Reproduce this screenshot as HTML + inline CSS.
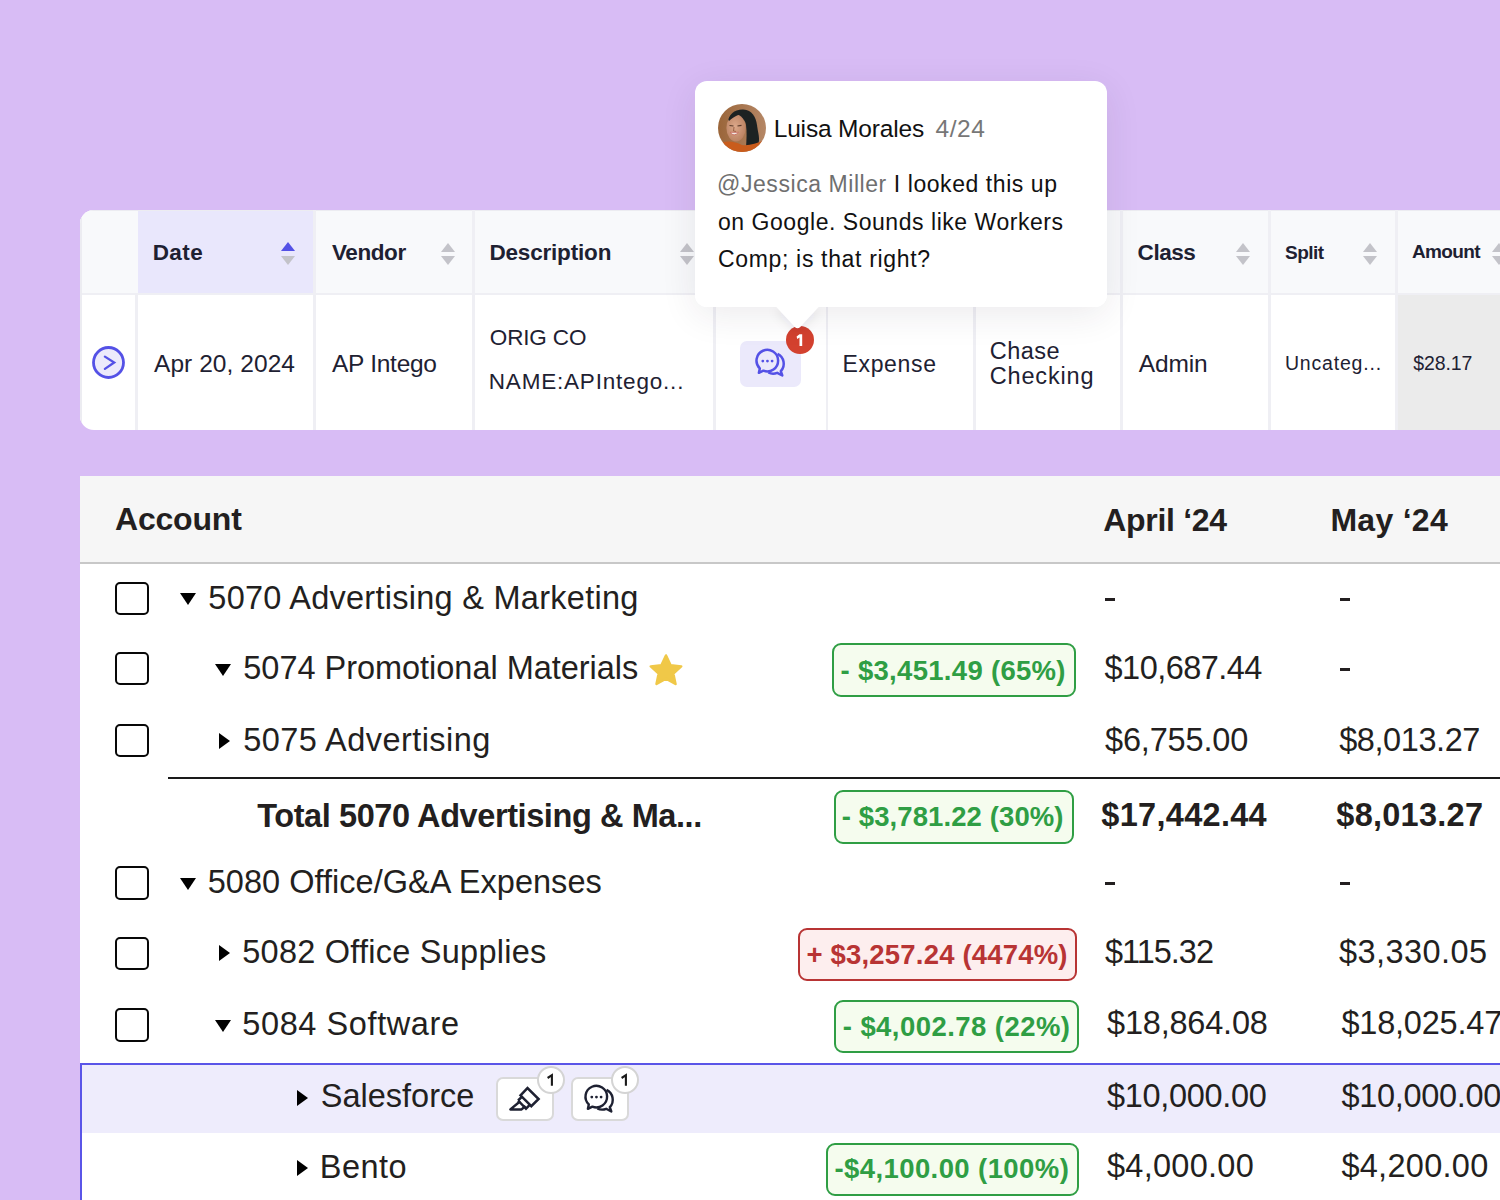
<!DOCTYPE html>
<html><head><meta charset="utf-8">
<style>
html,body{margin:0;padding:0}
html{overflow:hidden;width:1500px;height:1200px}
body{width:1500px;height:1200px;overflow:hidden;position:relative;background:#d8bcf5;font-family:"Liberation Sans",sans-serif}
.a{position:absolute}
.t{position:absolute;white-space:nowrap;line-height:1}
.vd{position:absolute;top:210px;height:220px;width:3px;background:#efeff4}
.up{position:absolute;width:0;height:0;border-left:7.5px solid transparent;border-right:7.5px solid transparent;border-bottom:9px solid #c3c3c9}
.dn{position:absolute;width:0;height:0;border-left:7.5px solid transparent;border-right:7.5px solid transparent;border-top:9px solid #c3c3c9}
.cb{position:absolute;left:115.2px;width:29.6px;height:29.4px;border:2.7px solid #080808;border-radius:5px;background:#fff}
.td{position:absolute;width:0;height:0;border-left:8.5px solid transparent;border-right:8.5px solid transparent;border-top:12px solid #000}
.tr{position:absolute;width:0;height:0;border-top:8.5px solid transparent;border-bottom:8.5px solid transparent;border-left:11.5px solid #000}
.hy{position:absolute;width:9.8px;height:2.8px;background:#231f20}
.bg{position:absolute;border:2px solid #2f9e44;background:#f5fcee;border-radius:9px;box-sizing:border-box}
.bgr{position:absolute;border:2px solid #b83434;background:#fdeeee;border-radius:9px;box-sizing:border-box}
.btn{position:absolute;top:1077px;height:44px;width:58px;box-sizing:border-box;border:2px solid #d9d9d9;border-radius:7px;background:#fff}
.nb{position:absolute;width:28px;height:28px;box-sizing:border-box;border:2px solid #d4d4d4;border-radius:50%;background:#fff;font-size:17px;line-height:24px;text-align:center;color:#1a1a1a}
#root{position:relative;width:1500px;height:1200px;overflow:hidden;background:#d8bcf5}
</style></head><body><div id="root">

<!-- TOP CARD -->
<div class="a" style="left:80px;top:210px;width:1440px;height:220px;background:#fff;border-radius:14px 0 0 14px;overflow:hidden">
  <div class="a" style="left:0;top:0;width:1440px;height:83px;background:#f8f9fb"></div>
  <div class="a" style="left:58px;top:0;width:175px;height:83px;background:#e9e7fc"></div>
  <div class="a" style="left:0;top:83px;width:1440px;height:2px;background:#efeff4"></div>
  <div class="a" style="left:1318px;top:85px;width:200px;height:135px;background:#ebebeb"></div>
  <div class="a" style="left:0;top:0;width:1.5px;height:220px;background:#ececf1"></div>
  <div class="a" style="left:0;top:0;width:1440px;height:1px;background:#ececf1"></div>
</div>
<div class="vd" style="left:135px;top:295px;height:135px"></div>
<div class="vd" style="left:313px"></div>
<div class="vd" style="left:472px"></div>
<div class="vd" style="left:713px;width:2.5px"></div>
<div class="vd" style="left:825.5px;width:2.5px"></div>
<div class="vd" style="left:972.5px"></div>
<div class="vd" style="left:1120px"></div>
<div class="vd" style="left:1268px"></div>
<div class="vd" style="left:1395px"></div>

<!-- sort arrows -->
<div class="up" style="left:281px;top:242px;border-bottom-color:#5451e6"></div><div class="dn" style="left:281px;top:256px"></div>
<div class="up" style="left:440.5px;top:242.5px"></div><div class="dn" style="left:440.5px;top:256px"></div>
<div class="up" style="left:680px;top:242.5px"></div><div class="dn" style="left:680px;top:256px"></div>
<div class="up" style="left:1236px;top:242.5px"></div><div class="dn" style="left:1236px;top:256px"></div>
<div class="up" style="left:1363px;top:242.5px"></div><div class="dn" style="left:1363px;top:256px"></div>
<div class="up" style="left:1492px;top:242.5px"></div><div class="dn" style="left:1492px;top:256px"></div>

<!-- row arrow circle -->
<svg class="a" style="left:90px;top:344px" width="37" height="37" viewBox="0 0 37 37">
  <circle cx="18.5" cy="18.5" r="15" fill="#eceafb" stroke="#5451e6" stroke-width="2.8"/>
  <path d="M14.9 12.6 L24.2 18.5 L14.9 24.9" fill="none" stroke="#5451e6" stroke-width="2.3" stroke-linecap="round" stroke-linejoin="miter"/>
</svg>

<!-- comment box -->
<div class="a" style="left:740px;top:341px;width:61px;height:46px;background:#ebe9fb;border-radius:7px"></div>
<svg class="a" style="left:748.7px;top:344.2px" width="44" height="36" viewBox="0 0 44 36">
  <path d="M14.4 26.7 A10.8 10.8 0 1 0 10.8 24.4 L9.9 28.8 Z" fill="none" stroke="#5451e6" stroke-width="2.5" stroke-linejoin="round"/>
  <path d="M28.5 9.9 A10.8 10.8 0 0 1 31.8 27.1 L33.3 31.5 L28.2 28.8 A10.8 10.8 0 0 1 19.3 28.5" fill="none" stroke="#5451e6" stroke-width="2.5" stroke-linejoin="round"/>
  <circle cx="13.8" cy="17.1" r="1.4" fill="#5451e6"/><circle cx="18.45" cy="17.1" r="1.4" fill="#5451e6"/><circle cx="23.1" cy="17.1" r="1.4" fill="#5451e6"/>
</svg>

<!-- LOWER CARD -->
<div class="a" style="left:80px;top:476px;width:1440px;height:760px;background:#fff">
  <div class="a" style="left:0;top:0;width:1440px;height:86px;background:#f6f6f6"></div>
  <div class="a" style="left:0;top:86px;width:1440px;height:2px;background:#c8c8c8"></div>
</div>
<!-- selected region -->
<div class="a" style="left:82px;top:1065px;width:1440px;height:67.5px;background:#eeecfc"></div>
<div class="a" style="left:80px;top:1063px;width:1440px;height:2px;background:#5a55e8"></div>
<div class="a" style="left:80px;top:1063px;width:2px;height:200px;background:#5a55e8"></div>
<!-- separator -->
<div class="a" style="left:168px;top:777px;width:1340px;height:2.2px;background:#1a1a1a"></div>

<!-- checkboxes -->
<div class="cb" style="top:581.5px"></div>
<div class="cb" style="top:652px"></div>
<div class="cb" style="top:724px"></div>
<div class="cb" style="top:866.3px"></div>
<div class="cb" style="top:936.5px"></div>
<div class="cb" style="top:1008.4px"></div>

<!-- triangles -->
<div class="td" style="left:180px;top:593px"></div>
<div class="td" style="left:215px;top:664px"></div>
<div class="tr" style="left:218.5px;top:733px"></div>
<div class="td" style="left:180px;top:877.5px"></div>
<div class="tr" style="left:218.5px;top:945px"></div>
<div class="td" style="left:215px;top:1019.5px"></div>
<div class="tr" style="left:297px;top:1089.5px"></div>
<div class="tr" style="left:297px;top:1160px"></div>

<!-- star -->
<svg class="a" style="left:648px;top:653.8px" width="36" height="34" viewBox="0 0 36 34">
  <path d="M18 1.5 L22.6 11.2 L33.2 12.4 L25.3 19.6 L27.5 30 L18 24.7 L8.5 30 L10.7 19.6 L2.8 12.4 L13.4 11.2 Z" fill="#f0c848" stroke="#f0c848" stroke-width="2.5" stroke-linejoin="round"/>
</svg>

<!-- hyphens -->
<div class="hy" style="left:1105px;top:598px"></div>
<div class="hy" style="left:1340px;top:598px"></div>
<div class="hy" style="left:1340px;top:668px"></div>
<div class="hy" style="left:1105px;top:882px"></div>
<div class="hy" style="left:1340px;top:882px"></div>

<!-- badges -->
<div class="bg" style="left:832px;top:643px;width:244px;height:54px"></div>
<div class="bg" style="left:833.5px;top:790px;width:240.5px;height:53.5px"></div>
<div class="bgr" style="left:797.5px;top:928px;width:279px;height:53px"></div>
<div class="bg" style="left:834px;top:1000px;width:244.5px;height:53px"></div>
<div class="bg" style="left:825.5px;top:1142.5px;width:253px;height:53px"></div>

<!-- salesforce buttons -->
<div class="btn" style="left:496px"></div>
<div class="btn" style="left:570.5px"></div>
<svg class="a" style="left:500px;top:1080px" width="50" height="36" viewBox="0 0 50 36">
  <path d="M20.5 15.3 L27.5 8.1 L38.6 19 L31.3 26.2 Z" fill="none" stroke="#1e2132" stroke-width="2.5" stroke-linejoin="miter"/>
  <path d="M18.1 20.5 L22 16.6 M18.1 20.5 L26 28.6 L30 24.6" fill="none" stroke="#1e2132" stroke-width="2.5" stroke-linejoin="miter"/>
  <path d="M19.3 22 L10.4 29.4 L21.6 29.4 L24.6 26.8" fill="none" stroke="#1e2132" stroke-width="2.5" stroke-linejoin="round" stroke-linecap="square"/>
</svg>
<svg class="a" style="left:578px;top:1080px" width="44" height="36" viewBox="0 0 44 36">
  <path d="M14.4 26.7 A10.8 10.8 0 1 0 10.8 24.4 L9.9 28.8 Z" fill="none" stroke="#1e2132" stroke-width="2.4" stroke-linejoin="round"/>
  <path d="M28.5 9.9 A10.8 10.8 0 0 1 31.8 27.1 L33.3 31.5 L28.2 28.8 A10.8 10.8 0 0 1 19.3 28.5" fill="none" stroke="#1e2132" stroke-width="2.4" stroke-linejoin="round"/>
  <circle cx="13.8" cy="17.1" r="1.4" fill="#1e2132"/><circle cx="18.45" cy="17.1" r="1.4" fill="#1e2132"/><circle cx="23.1" cy="17.1" r="1.4" fill="#1e2132"/>
</svg>
<div class="nb" style="left:536.5px;top:1065.5px"></div>
<div class="nb" style="left:610.5px;top:1065.5px"></div>

<!-- red badge -->
<div class="a" style="left:786px;top:326px;width:28px;height:28px;border-radius:50%;background:#d3412f;color:#fff;font-size:17px;font-weight:700;line-height:28px;text-align:center"></div>
<!-- TOOLTIP -->
<div class="a" style="left:695px;top:81px;width:412px;height:226px;background:#fff;border-radius:12px;box-shadow:0 8px 36px rgba(40,30,60,0.09)"></div>
<svg class="a" style="left:760px;top:290px" width="76" height="50" viewBox="0 0 76 50">
  <defs><filter id="sh" x="-50%" y="-50%" width="200%" height="200%"><feGaussianBlur stdDeviation="5"/></filter></defs>
  <path d="M13.5 16 L61.5 16 L40 37.2 Q37.5 39.4 35 37.2 Z" fill="rgba(40,30,60,0.07)" filter="url(#sh)" transform="translate(0,4)"/>
  <path d="M13.5 14 L61.5 14 L40 37.2 Q37.5 39.4 35 37.2 Z" fill="#fff"/>
</svg>
<div class="a" style="left:695px;top:240px;width:412px;height:67px;background:#fff;border-radius:0 0 12px 12px"></div>
<!-- avatar -->
<svg class="a" style="left:718px;top:104px" width="48" height="48" viewBox="0 0 48 48">
  <defs><clipPath id="av"><circle cx="24" cy="24" r="24"/></clipPath>
  <filter id="avb" x="-10%" y="-10%" width="120%" height="120%"><feGaussianBlur stdDeviation="0.7"/></filter>
  <linearGradient id="bgav" x1="0" y1="0" x2="1" y2="0"><stop offset="0" stop-color="#9a6539"/><stop offset="1" stop-color="#b58766"/></linearGradient>
  <radialGradient id="skin" cx="0.45" cy="0.45" r="0.6"><stop offset="0" stop-color="#dca88a"/><stop offset="1" stop-color="#b98060"/></radialGradient></defs>
  <g clip-path="url(#av)">
    <rect width="48" height="48" fill="url(#bgav)"/>
    <g filter="url(#avb)">
    <path d="M10 20 C10 10 17 5 25.5 5.5 C34 6 38 13 39 21 C40 29 42.5 35 40 41 L28 44 C28.5 36 29 28 28 21 C27 14 21 11 11.5 14 Z" fill="#1d2224"/>
    <ellipse cx="18" cy="24" rx="9.6" ry="13.4" fill="url(#skin)"/>
    <path d="M10.5 15 C13 9 20 6.5 26.5 8.5 C22 10 16.5 12 11 17 Z" fill="#1d2224"/>
    <path d="M11.5 21.5 L15.5 22 M19.5 22 L23.5 21.3" stroke="#5a3a2a" stroke-width="1.2"/>
    <path d="M16 23 L15.5 27 L18 27.5" stroke="#9c6448" stroke-width="1" fill="none"/>
    <path d="M12 28.3 Q16 33.5 20.5 28.3 Z" fill="#f1e8e2" stroke="#c76e62" stroke-width="0.9"/>
    <path d="M2 48 L4 38.5 C10 36.5 17 37.5 24 41 C31 42 38 39.5 46 36.5 L48 48 Z" fill="#c95b1d"/>
    </g>
  </g>
</svg>


<svg class="a" style="left:0;top:0;overflow:visible" width="1" height="1">
  <path d="M799.5 334.2 L802.2 334.2 L802.2 346 L799.5 346 L799.5 337.6 L797.2 339 L796.6 336.5 Z" fill="#fff"/>
  <path d="M547.6 1078 L551.9 1075.2 L551.9 1085.8" stroke="#1a1a1a" stroke-width="2.1" fill="none"/>
  <path d="M621.6 1078 L625.9 1075.2 L625.9 1085.8" stroke="#1a1a1a" stroke-width="2.1" fill="none"/>
</svg>
<div class="t" style="left:773.7px;top:117.2px;font-size:24.5px;font-weight:400;color:#111111;letter-spacing:-0.168px">Luisa Morales</div>
<div class="t" style="left:935.5px;top:117.2px;font-size:24.5px;font-weight:400;color:#777777;letter-spacing:0.571px">4/24</div>
<div class="t" style="left:717.0px;top:173.0px;font-size:23px;font-weight:400;color:#111111;letter-spacing:0.565px"><span style="color:#6f6f6f">@Jessica Miller</span> I looked this up</div>
<div class="t" style="left:718.0px;top:211.0px;font-size:23px;font-weight:400;color:#111111;letter-spacing:0.537px">on Google. Sounds like Workers</div>
<div class="t" style="left:718.0px;top:248.2px;font-size:23px;font-weight:400;color:#111111;letter-spacing:0.662px">Comp; is that right?</div>
<div class="t" style="left:152.7px;top:242.1px;font-size:22.5px;font-weight:700;color:#1e2132;letter-spacing:0.406px">Date</div>
<div class="t" style="left:332.0px;top:241.8px;font-size:22.5px;font-weight:700;color:#1e2132;letter-spacing:-0.416px">Vendor</div>
<div class="t" style="left:489.4px;top:241.7px;font-size:22.5px;font-weight:700;color:#1e2132;letter-spacing:-0.178px">Description</div>
<div class="t" style="left:1137.6px;top:241.8px;font-size:22.5px;font-weight:700;color:#1e2132;letter-spacing:-0.462px">Class</div>
<div class="t" style="left:1285.0px;top:242.8px;font-size:19px;font-weight:700;color:#1e2132;letter-spacing:-0.543px">Split</div>
<div class="t" style="left:1412.0px;top:242.1px;font-size:19px;font-weight:700;color:#1e2132;letter-spacing:-0.653px">Amount</div>
<div class="t" style="left:154.0px;top:352.1px;font-size:24.5px;font-weight:400;color:#1e2132;letter-spacing:0.062px">Apr 20, 2024</div>
<div class="t" style="left:332.0px;top:352.1px;font-size:24.5px;font-weight:400;color:#1e2132;letter-spacing:-0.271px">AP Intego</div>
<div class="t" style="left:489.8px;top:327.1px;font-size:22.5px;font-weight:400;color:#1e2132;letter-spacing:-0.153px">ORIG CO</div>
<div class="t" style="left:488.8px;top:371.1px;font-size:22.5px;font-weight:400;color:#1e2132;letter-spacing:0.800px">NAME:APIntego...</div>
<div class="t" style="left:842.5px;top:353.0px;font-size:23px;font-weight:400;color:#1e2132;letter-spacing:0.664px">Expense</div>
<div class="t" style="left:989.7px;top:339.6px;font-size:23.5px;font-weight:400;color:#1e2132;letter-spacing:0.491px">Chase</div>
<div class="t" style="left:989.7px;top:364.8px;font-size:23.5px;font-weight:400;color:#1e2132;letter-spacing:0.845px">Checking</div>
<div class="t" style="left:1138.7px;top:352.1px;font-size:24.5px;font-weight:400;color:#1e2132;letter-spacing:-0.113px">Admin</div>
<div class="t" style="left:1284.9px;top:354.4px;font-size:19.5px;font-weight:400;color:#1e2132;letter-spacing:0.823px">Uncateg...</div>
<div class="t" style="left:1413.3px;top:354.3px;font-size:19.5px;font-weight:400;color:#1e2132;letter-spacing:-0.111px">$28.17</div>
<div class="t" style="left:115.0px;top:503.1px;font-size:32px;font-weight:700;color:#231f20;letter-spacing:-0.200px">Account</div>
<div class="t" style="left:1103.2px;top:503.7px;font-size:32px;font-weight:700;color:#231f20;letter-spacing:-0.296px">April ‘24</div>
<div class="t" style="left:1330.4px;top:503.7px;font-size:32px;font-weight:700;color:#231f20;letter-spacing:0.279px">May ‘24</div>
<div class="t" style="left:208.3px;top:582.0px;font-size:32.5px;font-weight:400;color:#231f20;letter-spacing:0.272px">5070 Advertising &amp; Marketing</div>
<div class="t" style="left:243.3px;top:652.0px;font-size:32.5px;font-weight:400;color:#231f20;letter-spacing:-0.025px">5074 Promotional Materials</div>
<div class="t" style="left:243.3px;top:724.4px;font-size:32.5px;font-weight:400;color:#231f20;letter-spacing:0.446px">5075 Advertising</div>
<div class="t" style="left:257.2px;top:800.0px;font-size:32.5px;font-weight:700;color:#231f20;letter-spacing:-0.408px">Total 5070 Advertising &amp; Ma...</div>
<div class="t" style="left:207.7px;top:865.8px;font-size:32.5px;font-weight:400;color:#231f20;letter-spacing:0.036px">5080 Office/G&amp;A Expenses</div>
<div class="t" style="left:242.3px;top:936.2px;font-size:32.5px;font-weight:400;color:#231f20;letter-spacing:0.241px">5082 Office Supplies</div>
<div class="t" style="left:242.3px;top:1008.0px;font-size:32.5px;font-weight:400;color:#231f20;letter-spacing:0.592px">5084 Software</div>
<div class="t" style="left:320.8px;top:1080.4px;font-size:32.5px;font-weight:400;color:#231f20;letter-spacing:-0.007px">Salesforce</div>
<div class="t" style="left:319.8px;top:1150.8px;font-size:32.5px;font-weight:400;color:#231f20;letter-spacing:0.466px">Bento</div>
<div class="t" style="left:1104.6px;top:652.2px;font-size:32.5px;font-weight:400;color:#231f20;letter-spacing:-0.552px">$10,687.44</div>
<div class="t" style="left:1105.0px;top:723.7px;font-size:32.5px;font-weight:400;color:#231f20;letter-spacing:-0.162px">$6,755.00</div>
<div class="t" style="left:1339.2px;top:723.7px;font-size:32.5px;font-weight:400;color:#231f20;letter-spacing:-0.424px">$8,013.27</div>
<div class="t" style="left:1101.3px;top:798.9px;font-size:32.5px;font-weight:700;color:#231f20;letter-spacing:0.303px">$17,442.44</div>
<div class="t" style="left:1336.3px;top:798.9px;font-size:32.5px;font-weight:700;color:#231f20;letter-spacing:0.263px">$8,013.27</div>
<div class="t" style="left:1105.0px;top:935.5px;font-size:32.5px;font-weight:400;color:#231f20;letter-spacing:-1.013px">$115.32</div>
<div class="t" style="left:1339.0px;top:935.5px;font-size:32.5px;font-weight:400;color:#231f20;letter-spacing:0.438px">$3,330.05</div>
<div class="t" style="left:1107.0px;top:1007.0px;font-size:32.5px;font-weight:400;color:#231f20;letter-spacing:-0.197px">$18,864.08</div>
<div class="t" style="left:1341.4px;top:1007.0px;font-size:32.5px;font-weight:400;color:#231f20;letter-spacing:-0.197px">$18,025.47</div>
<div class="t" style="left:1107.0px;top:1079.7px;font-size:32.5px;font-weight:400;color:#231f20;letter-spacing:-0.308px">$10,000.00</div>
<div class="t" style="left:1341.4px;top:1079.7px;font-size:32.5px;font-weight:400;color:#231f20;letter-spacing:-0.308px">$10,000.00</div>
<div class="t" style="left:1107.0px;top:1149.9px;font-size:32.5px;font-weight:400;color:#231f20;letter-spacing:0.276px">$4,000.00</div>
<div class="t" style="left:1341.4px;top:1149.9px;font-size:32.5px;font-weight:400;color:#231f20;letter-spacing:0.288px">$4,200.00</div>
<div class="t" style="left:840.5px;top:656.9px;font-size:27.5px;font-weight:700;color:#2f9e44;letter-spacing:0.304px">- $3,451.49 (65%)</div>
<div class="t" style="left:841.8px;top:803.3px;font-size:27.5px;font-weight:700;color:#2f9e44;letter-spacing:0.097px">- $3,781.22 (30%)</div>
<div class="t" style="left:806.5px;top:941.2px;font-size:27.5px;font-weight:700;color:#b83434;letter-spacing:0.188px">+ $3,257.24 (4474%)</div>
<div class="t" style="left:842.7px;top:1012.9px;font-size:27.5px;font-weight:700;color:#2f9e44;letter-spacing:0.447px">- $4,002.78 (22%)</div>
<div class="t" style="left:834.5px;top:1155.4px;font-size:27.5px;font-weight:700;color:#2f9e44;letter-spacing:0.406px">-$4,100.00 (100%)</div>
</div></body></html>
